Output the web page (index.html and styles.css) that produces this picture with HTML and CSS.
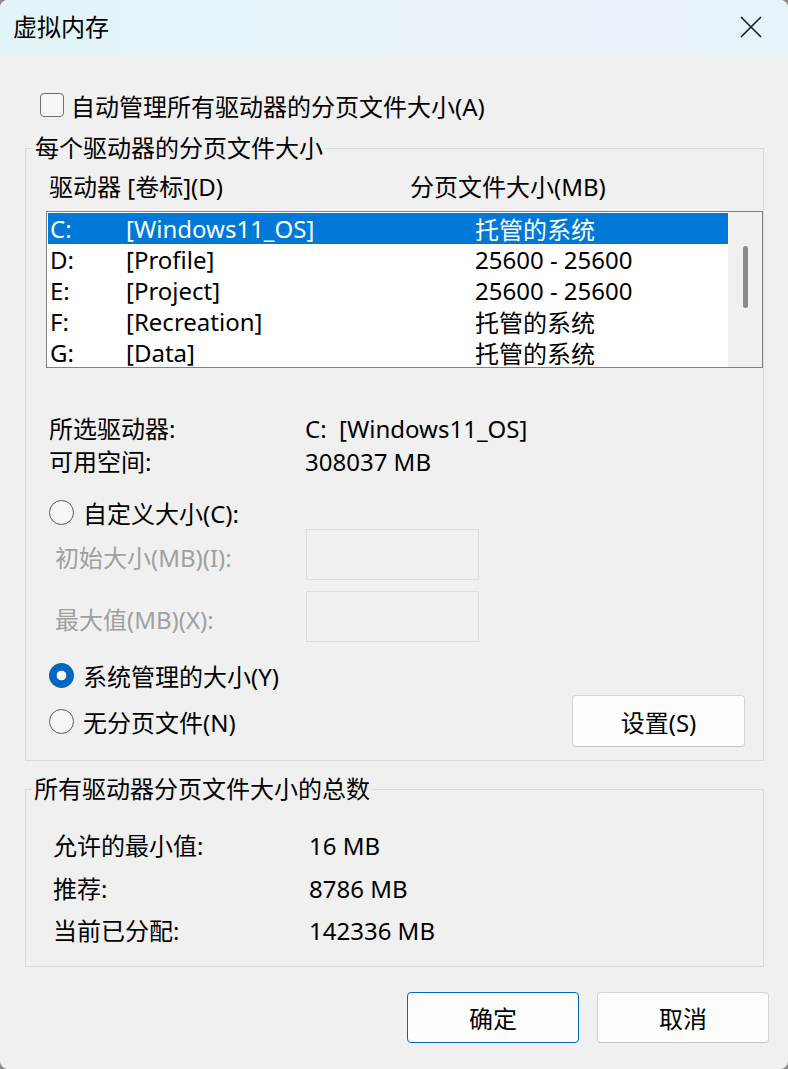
FILE: index.html
```html
<!DOCTYPE html>
<html lang="zh-CN">
<head>
<meta charset="utf-8">
<title>虚拟内存</title>
<link rel="stylesheet" href="styles.css">
</head>
<body>
<div class="window">
  <header class="titlebar">
    <span class="title">虚拟内存</span>
    <span class="close" aria-label="关闭">
      <svg width="22" height="22" viewBox="0 0 22 22"><path d="M1 1 L21 21 M21 1 L1 21" stroke="#1a1a1a" stroke-width="1.6" fill="none"/></svg>
    </span>
  </header>
  <main class="content">
    <label class="check-row"><span class="checkbox"></span><span>自动管理所有驱动器的分页文件大小(A)</span></label>

    <fieldset class="group drives">
      <legend>每个驱动器的分页文件大小</legend>
      <div class="list-head"><span class="h1">驱动器 [卷标](D)</span><span class="h2">分页文件大小(MB)</span></div>
      <div class="listbox">
        <div class="rows">
          <div class="row selected"><span class="c1">C:</span><span class="c2">[Windows11_OS]</span><span class="c3">托管的系统</span></div>
          <div class="row"><span class="c1">D:</span><span class="c2">[Profile]</span><span class="c3">25600 - 25600</span></div>
          <div class="row"><span class="c1">E:</span><span class="c2">[Project]</span><span class="c3">25600 - 25600</span></div>
          <div class="row"><span class="c1">F:</span><span class="c2">[Recreation]</span><span class="c3">托管的系统</span></div>
          <div class="row"><span class="c1">G:</span><span class="c2">[Data]</span><span class="c3">托管的系统</span></div>
        </div>
        <div class="scrollbar"><div class="thumb"></div></div>
      </div>

      <div class="info">
        <span>所选驱动器:</span><span>C:&nbsp;&nbsp;[Windows11_OS]</span>
        <span>可用空间:</span><span>308037 MB</span>
      </div>

      <label class="radio-row custom"><span class="radio"></span><span>自定义大小(C):</span></label>
      <div class="field-row first"><span class="field-label">初始大小(MB)(I):</span><span class="input"></span></div>
      <div class="field-row"><span class="field-label">最大值(MB)(X):</span><span class="input"></span></div>

      <label class="radio-row system"><span class="radio checked"></span><span>系统管理的大小(Y)</span></label>
      <div class="last-row">
        <label class="radio-row none"><span class="radio"></span><span>无分页文件(N)</span></label>
        <button class="btn set">设置(S)</button>
      </div>
    </fieldset>

    <fieldset class="group totals">
      <legend>所有驱动器分页文件大小的总数</legend>
      <div class="totals-grid">
        <span>允许的最小值:</span><span>16 MB</span>
        <span>推荐:</span><span>8786 MB</span>
        <span>当前已分配:</span><span>142336 MB</span>
      </div>
    </fieldset>

    <div class="actions">
      <button class="btn primary">确定</button>
      <button class="btn">取消</button>
    </div>
  </main>
</div>
</body>
</html>
```

FILE: styles.css
```css
* { box-sizing: border-box; }
html, body { margin: 0; padding: 0; }
body {
  background: #8a8a8a;
  font-family: "Noto Sans", "Noto Sans CJK SC", sans-serif;
  font-size: 24px;
  color: #000;
}
.window {
  width: 788px;
  height: 1069px;
  background: #f0f0f0;
  border-radius: 8px;
  overflow: hidden;
  display: flex;
  flex-direction: column;
}
.titlebar {
  height: 55px;
  flex: none;
  background: linear-gradient(90deg, #e2f4f8 0%, #e9f4f8 60%, #e6f3f8 100%);
  display: flex;
  align-items: center;
  justify-content: space-between;
  padding: 0 26px 2px 13px;
}
.title { font-size: 24px; line-height: 28px; }
.close { display: flex; }

.content {
  padding: 35px 24px 0 25px;
  display: flex;
  flex-direction: column;
}
.check-row {
  display: flex;
  align-items: center;
  height: 30px;
  padding-left: 15px;
  gap: 7px;
}
.checkbox {
  width: 24px;
  height: 24px;
  border: 1.5px solid #6e6e6e;
  border-radius: 4px;
  background: #f6f6f6;
}

.group {
  margin: 16px 0 0 0;
  border: 1px solid #dadada;
  min-width: 0;
}
.group legend {
  padding: 0 2px;
  line-height: 24px;
}
.drives {
  padding: 0 0 13px 20px;
}
.drives legend { margin-left: -13px; }
.list-head {
  display: flex;
  height: 51px;
  align-items: center;
  padding: 0 0 0 3px;
}
.list-head .h1 { width: 361px; }

.listbox {
  height: 157px;
  border: 1px solid #828282;
  background: #fff;
  display: flex;
  padding: 1px 0 1px 1px;
}
.rows { flex: 1; }
.row {
  display: flex;
  height: 31px;
  align-items: center;
  padding-left: 2px;
}
.row.selected { background: #0078d7; color: #fff; }
.c1 { width: 76px; }
.c2 { width: 349px; }
.scrollbar {
  width: 34px;
  background: #f0f0f0;
  margin: -1px 0;
  padding: 34px 0 0 15px;
}
.thumb {
  width: 5px;
  height: 62px;
  border-radius: 3px;
  background: #8a8a8a;
}

.info {
  display: grid;
  grid-template-columns: 256px auto;
  line-height: 33px;
  margin-top: 44px;
  padding-left: 3px;
}

.radio-row {
  display: flex;
  align-items: center;
  gap: 9px;
  height: 32px;
  padding-left: 3px;
}
.custom { margin-top: 18px; }
.system { margin-top: 17px; }
.radio {
  width: 25px;
  height: 25px;
  border-radius: 50%;
  border: 1.5px solid #5a5a5a;
  background: #f6f6f6;
  flex: none;
}
.radio.checked {
  border: none;
  background: radial-gradient(circle, #fff 0 4.5px, #0067c0 5.2px);
}

.field-row {
  display: flex;
  align-items: center;
  margin-top: 11px;
  color: #a0a0a0;
  padding-left: 9px;
}
.field-row.first { margin-top: 1px; }
.field-label { width: 251px; padding-top: 3px; }
.input {
  width: 173px;
  height: 51px;
  border: 1px solid #dedede;
  background: #f0f0f0;
}

.last-row {
  display: flex;
  align-items: center;
  justify-content: space-between;
  margin-top: 4px;
  padding-right: 18px;
}

.btn {
  font: inherit;
  color: #000;
  width: 173px;
  height: 52px;
  background: #fdfdfd;
  border: 1px solid #d3d3d3;
  border-bottom-color: #c4c4c4;
  border-radius: 4px;
  padding: 0;
}
.btn.primary { border-color: #0067c0; }

.totals {
  padding: 24px 0 13px 27px;
}
.totals legend { margin-left: -21px; }
.totals-grid {
  display: grid;
  grid-template-columns: 256px auto;
  line-height: 42.5px;
}

.actions {
  display: flex;
  justify-content: flex-end;
  gap: 18px;
  margin-top: 25px;
  margin-right: -5px;
}
.actions .btn { width: 172px; height: 51px; }
```
